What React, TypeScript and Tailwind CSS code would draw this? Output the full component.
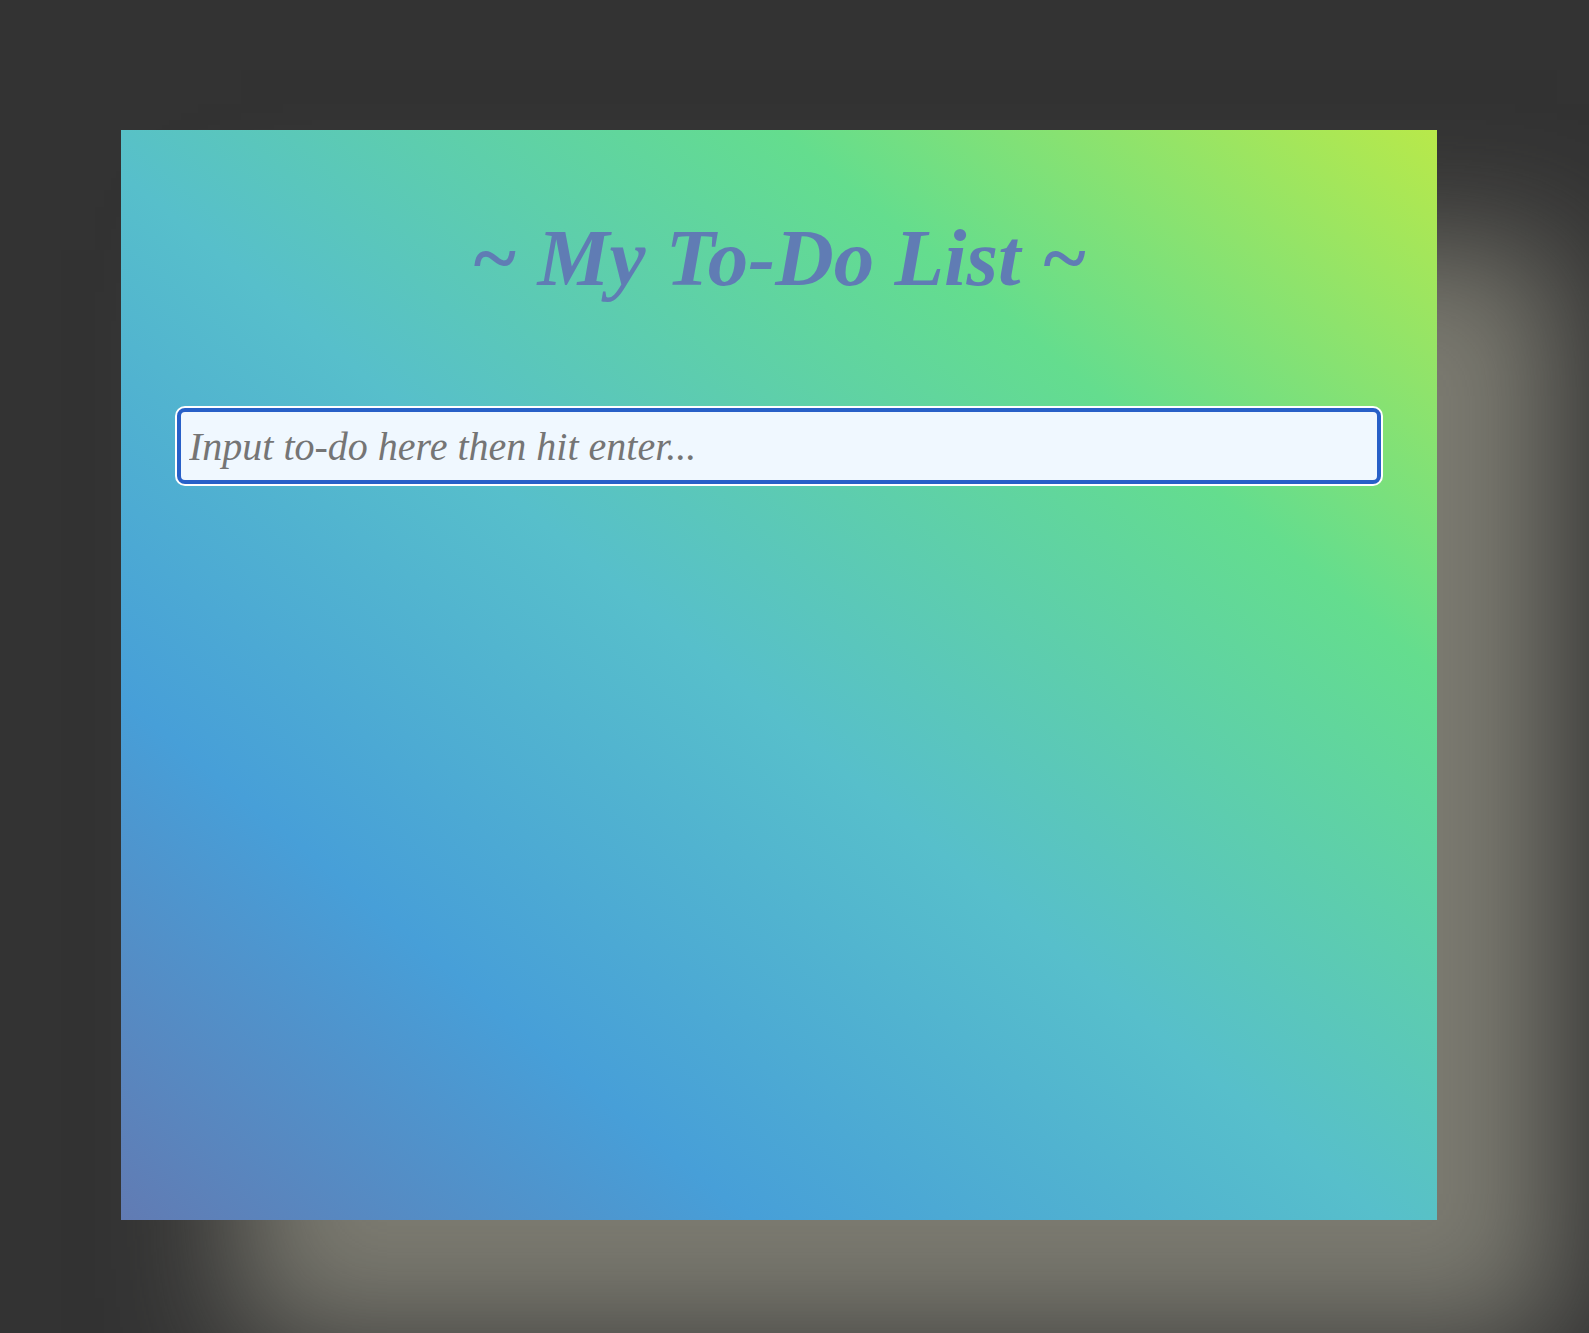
import { useState } from "react";
import type { FormEvent } from "react";

export default function App() {
  const [items, setItems] = useState<string[]>([]);
  const [draft, setDraft] = useState("");

  function addItem(event: FormEvent) {
    event.preventDefault();
    const text = draft.trim();
    if (!text) return;
    setItems([...items, text]);
    setDraft("");
  }

  return (
    <div className="flex min-h-screen bg-[#333333] pt-[130px] pr-[152px] pb-[113px] pl-[121px] font-['Apple_Chancery','URW_Chancery_L','Z003','Liberation_Serif',serif]">
      <main className="min-w-0 flex-1 bg-[linear-gradient(to_top_right,#617bb3,#479fd8_24%,#57bfcb_48%,#64dd8e_75%,#b8e94a)] px-14 pt-[68px] pb-14 shadow-[120px_120px_120px_#7c7b71]">
        <h1 className="text-center text-[81px] leading-[120px] font-bold text-[#607cb4] italic">
          ~ My To-Do List ~
        </h1>
        <form onSubmit={addItem} className="mt-[90px]">
          <input
            type="text"
            aria-label="New to-do"
            placeholder="Input to-do here then hit enter..."
            value={draft}
            onChange={(event) => setDraft(event.target.value)}
            className="h-[76px] w-full rounded-lg border-4 border-[#2860c8] bg-[#f0f8ff] px-2 text-[40px] text-gray-800 italic ring-2 ring-white outline-none placeholder:text-[#757575]"
          />
        </form>
        <ul className="mt-8 text-[40px] text-gray-800 italic">
          {items.map((item, index) => (
            <li key={index}>{item}</li>
          ))}
        </ul>
      </main>
    </div>
  );
}
